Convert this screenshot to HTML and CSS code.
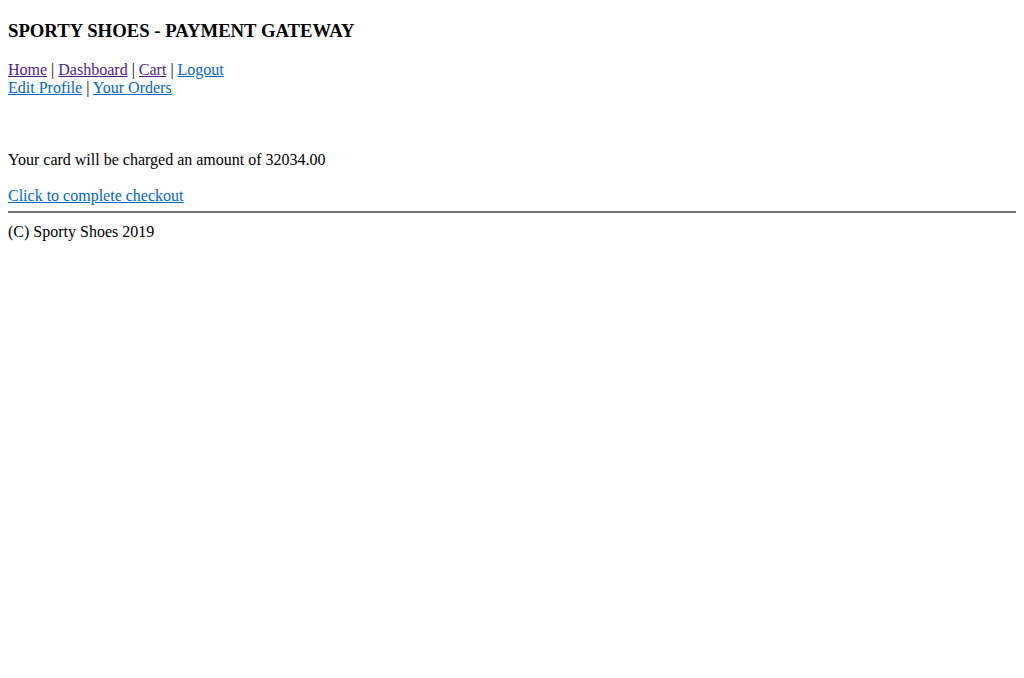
FILE: index.html
```html
<!DOCTYPE html>
<html>
<head>
<meta charset="utf-8">
<title>Sporty Shoes - Payment Gateway</title>
<link rel="stylesheet" href="styles.css">
</head>
<body>
<h3 class="title">SPORTY SHOES - PAYMENT GATEWAY</h3>
<div class="nav">
<a class="visited" href="#home">Home</a> | <a class="visited" href="#dash">Dashboard</a> | <a class="visited" href="#cart">Cart</a> | <a href="#logout">Logout</a><br>
<a href="#profile">Edit Profile</a> | <a href="#orders">Your Orders</a>
</div>
<div class="content">
<br><br><br>
Your card will be charged an amount of 32034.00<br><br>
<a href="#checkout">Click to complete checkout</a>
</div>
<hr class="rule">
<div class="footer">(C) Sporty Shoes 2019</div>
</body>
</html>
```
FILE: styles.css
```css
body {
  margin: 8px;
  font-family: "Liberation Serif", "Times New Roman", serif;
  font-size: 16px;
  color: #000;
  background: #fff;
}
.title {
  font-size: 18.72px;
  font-weight: bold;
  margin: 12px 0 18.72px;
}
a {
  color: #0066cc;
  text-decoration: underline;
}
a.visited {
  color: #551a8b;
}
.rule {
  margin: 6px 0 10px;
  border: 1px solid #777;
  height: 0;
}
```
